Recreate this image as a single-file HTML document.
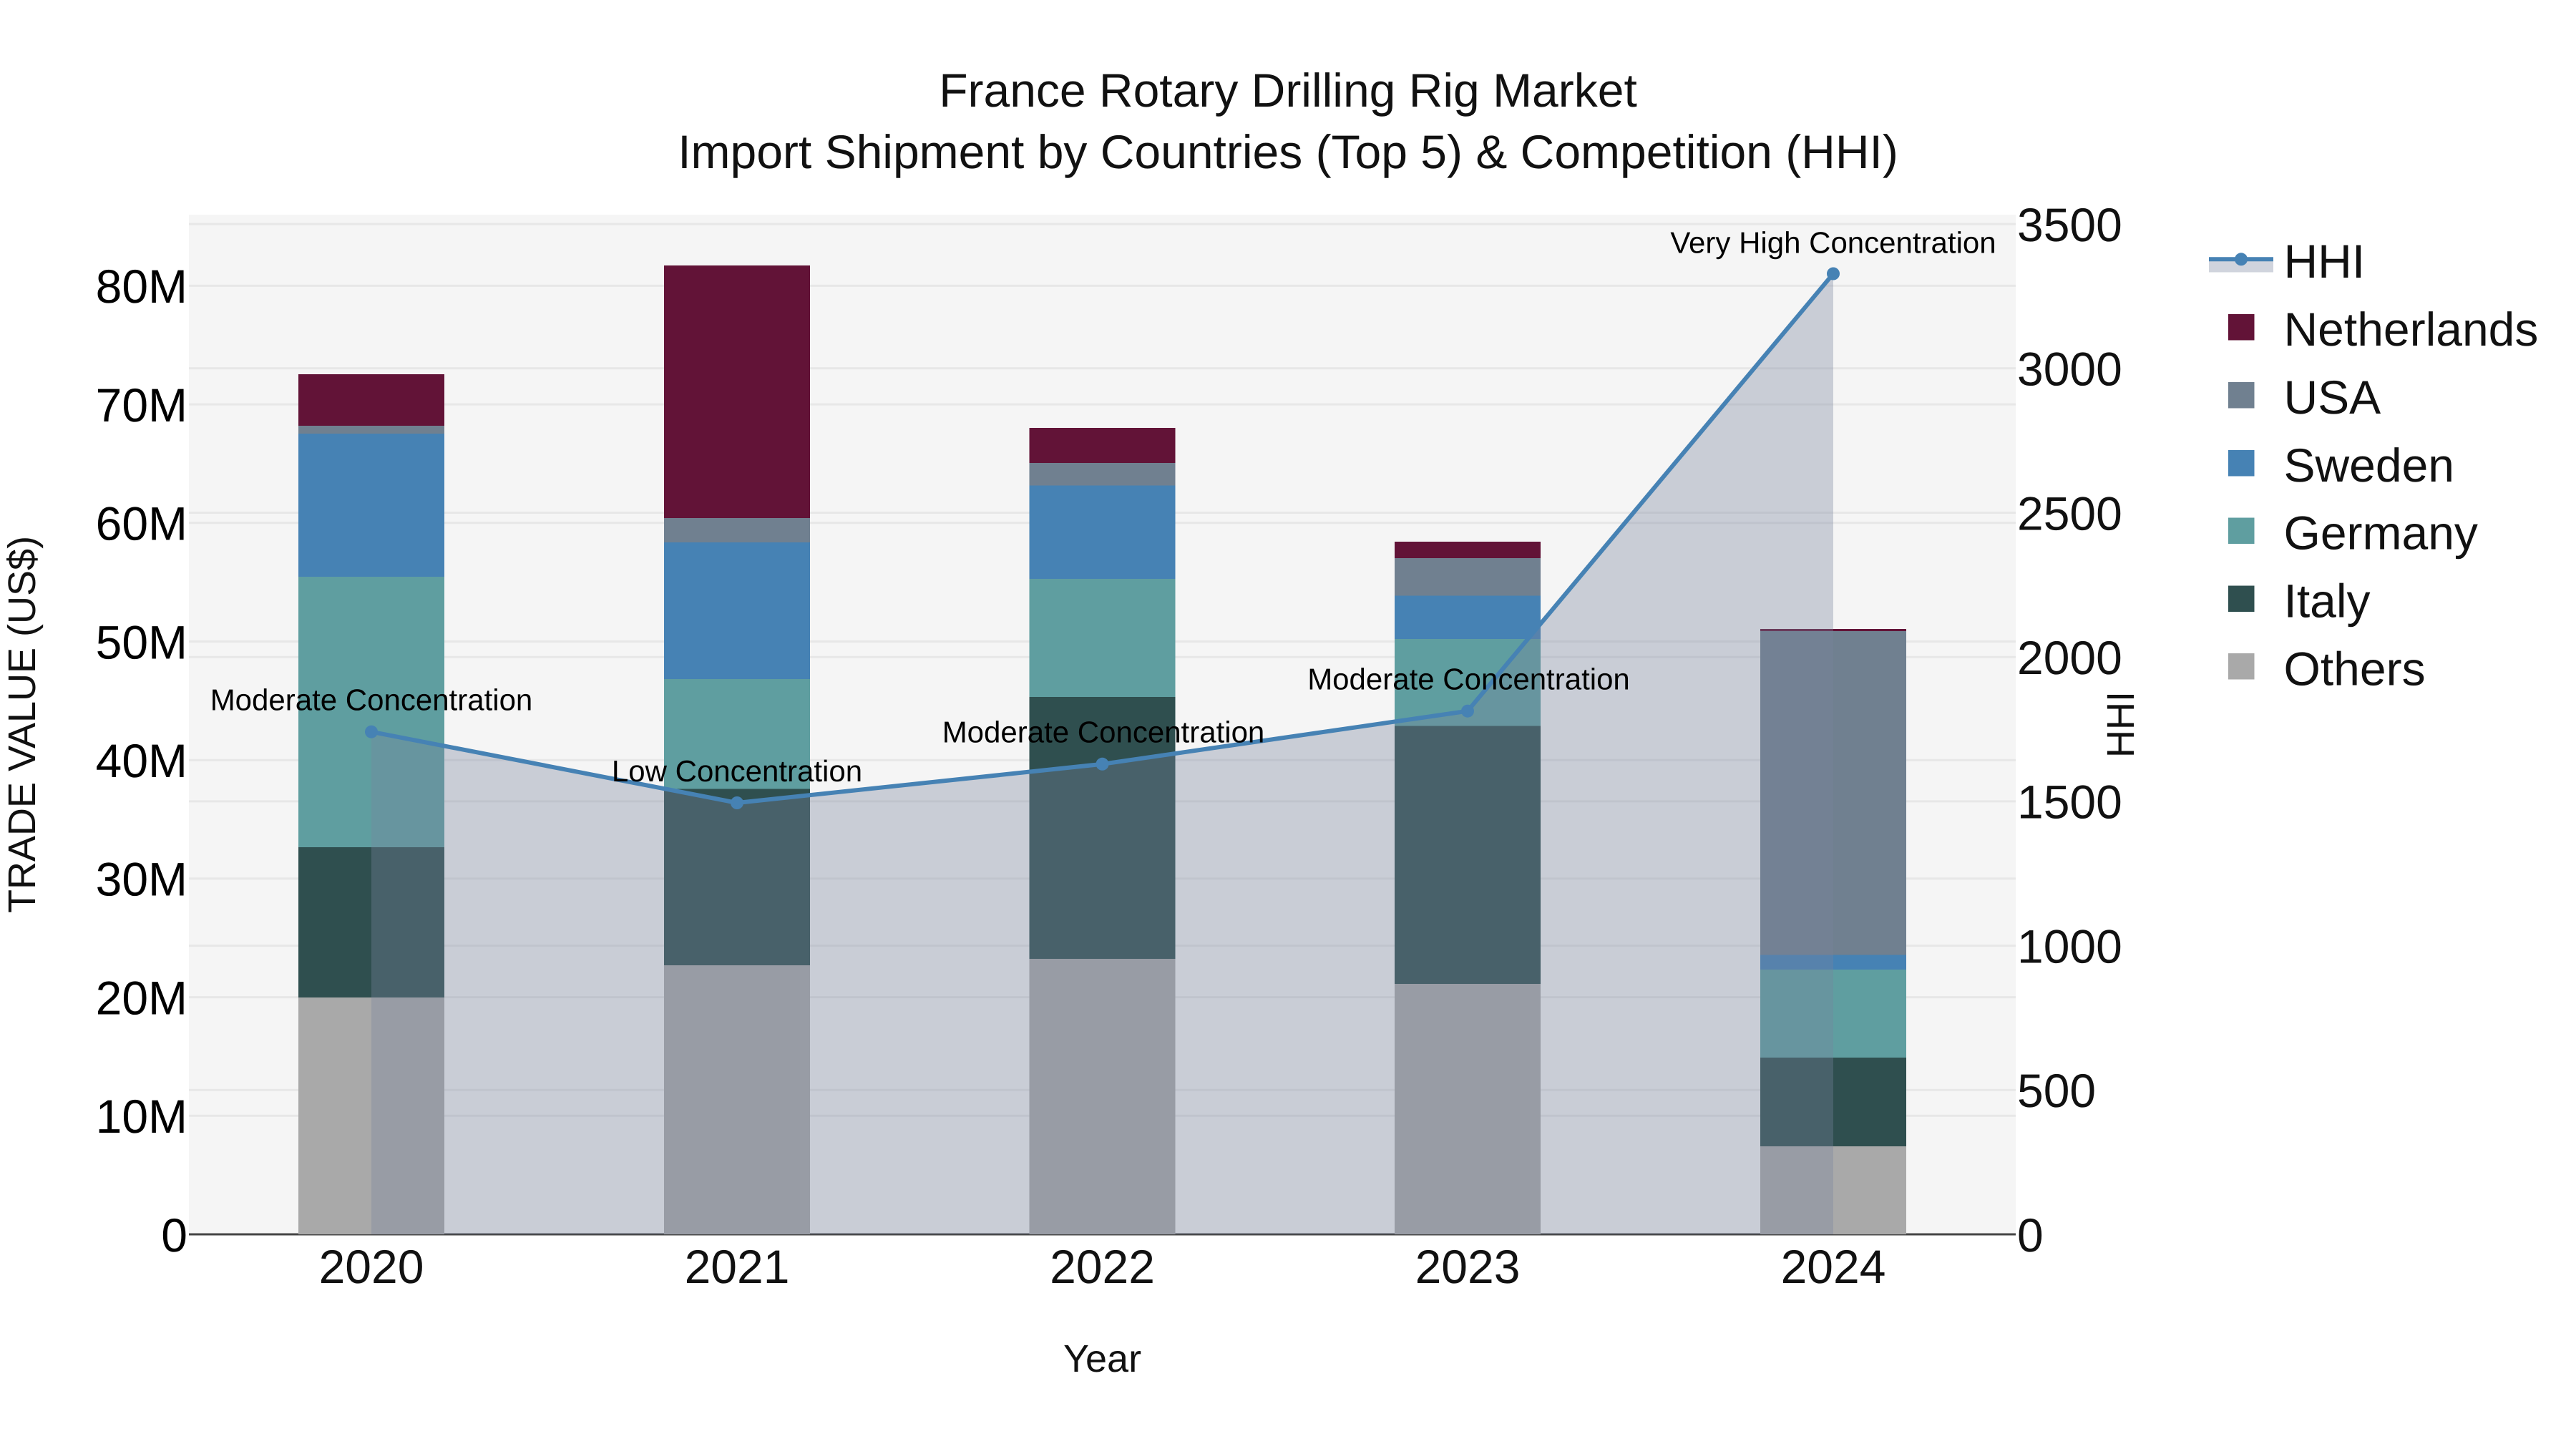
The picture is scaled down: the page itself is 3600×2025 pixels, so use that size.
<!DOCTYPE html>
<html lang="en">
<head>
<meta charset="utf-8">
<title>France Rotary Drilling Rig Market</title>
<style>
html,body{margin:0;padding:0;background:#fff;width:3600px;height:2025px;overflow:hidden}
svg{display:block}
text{font-family:"Liberation Sans",Arial,sans-serif;white-space:pre;text-rendering:geometricPrecision}
.t{font-size:66px;fill:#111}
.l{font-size:66px;fill:#000;text-anchor:end}
.x{font-size:66px;fill:#111;text-anchor:middle}
.r{font-size:66px;fill:#111}
.a{font-size:42px;fill:#000;text-anchor:middle}
.g{stroke:#e7e7e7;stroke-width:3;fill:none}
</style>
</head>
<body>
<svg width="3600" height="2025" viewBox="0 0 3600 2025" xmlns="http://www.w3.org/2000/svg">
<rect width="3600" height="2025" fill="#fff"/>
<rect x="264" y="300" width="2553" height="1425" fill="#f5f5f5"/>
<g class="g">
<path d="M264 1559.3H2817M264 1393.6H2817M264 1227.9H2817M264 1062.2H2817M264 896.5H2817M264 730.8H2817M264 565.1H2817M264 399.4H2817"/>
<path d="M264 1523.3H2817M264 1321.6H2817M264 1119.9H2817M264 918.2H2817M264 716.5H2817M264 514.8H2817M264 313.1H2817"/>
</g>
<path d="M264 1725H2817" stroke="#444" stroke-width="3" fill="none"/>

<!-- bars: 2020 -->
<g>
<rect x="417" y="1394" width="204" height="331" fill="#a9a9a9"/>
<rect x="417" y="1184" width="204" height="210" fill="#2f4f4f"/>
<rect x="417" y="806" width="204" height="378" fill="#5f9ea0"/>
<rect x="417" y="606" width="204" height="200" fill="#4682b4"/>
<rect x="417" y="595" width="204" height="11" fill="#708090"/>
<rect x="417" y="523" width="204" height="72" fill="#621337"/>
</g>
<!-- 2021 -->
<g>
<rect x="928" y="1349" width="204" height="376" fill="#a9a9a9"/>
<rect x="928" y="1102.5" width="204" height="246.5" fill="#2f4f4f"/>
<rect x="928" y="949" width="204" height="153.5" fill="#5f9ea0"/>
<rect x="928" y="758" width="204" height="191" fill="#4682b4"/>
<rect x="928" y="724" width="204" height="34" fill="#708090"/>
<rect x="928" y="371" width="204" height="353" fill="#621337"/>
</g>
<!-- 2022 -->
<g>
<rect x="1438.5" y="1340" width="204" height="385" fill="#a9a9a9"/>
<rect x="1438.5" y="974" width="204" height="366" fill="#2f4f4f"/>
<rect x="1438.5" y="809" width="204" height="165" fill="#5f9ea0"/>
<rect x="1438.5" y="678.5" width="204" height="130.5" fill="#4682b4"/>
<rect x="1438.5" y="647" width="204" height="31.5" fill="#708090"/>
<rect x="1438.5" y="598" width="204" height="49" fill="#621337"/>
</g>
<!-- 2023 -->
<g>
<rect x="1949" y="1375" width="204" height="350" fill="#a9a9a9"/>
<rect x="1949" y="1014.5" width="204" height="360.5" fill="#2f4f4f"/>
<rect x="1949" y="893" width="204" height="121.5" fill="#5f9ea0"/>
<rect x="1949" y="832.5" width="204" height="60.5" fill="#4682b4"/>
<rect x="1949" y="780" width="204" height="52.5" fill="#708090"/>
<rect x="1949" y="757" width="204" height="23" fill="#621337"/>
</g>
<!-- 2024 -->
<g>
<rect x="2460" y="1602" width="204" height="123" fill="#a9a9a9"/>
<rect x="2460" y="1478" width="204" height="124" fill="#2f4f4f"/>
<rect x="2460" y="1355" width="204" height="123" fill="#5f9ea0"/>
<rect x="2460" y="1334.5" width="204" height="20.5" fill="#4682b4"/>
<rect x="2460" y="882" width="204" height="452.5" fill="#708090"/>
<rect x="2460" y="879" width="204" height="3" fill="#621337"/>
</g>

<!-- HHI fill and line -->
<path d="M519 1022.7L1030 1122L1540.5 1067.8L2051 993.7L2562 382.5V1725H519Z" fill="rgb(120,132,158)" fill-opacity=".35"/>
<path d="M519 1022.7L1030 1122L1540.5 1067.8L2051 993.7L2562 382.5" fill="none" stroke="#4682b4" stroke-width="6" stroke-linejoin="round"/>
<g fill="#4682b4">
<circle cx="519" cy="1022.7" r="9"/>
<circle cx="1030" cy="1122" r="9"/>
<circle cx="1540.5" cy="1067.8" r="9"/>
<circle cx="2051" cy="993.7" r="9"/>
<circle cx="2562" cy="382.5" r="9"/>
</g>

<!-- annotations -->
<text class="a" x="519" y="992.5">Moderate Concentration</text>
<text class="a" x="1030" y="1091.8">Low Concentration</text>
<text class="a" x="1542" y="1037.6">Moderate Concentration</text>
<text class="a" x="2052.5" y="963.5">Moderate Concentration</text>
<text class="a" x="2562" y="353.5">Very High Concentration</text>

<!-- title -->
<text class="t" x="1800" y="149" text-anchor="middle">France Rotary Drilling Rig Market</text>
<text class="t" x="1800" y="235" text-anchor="middle">Import Shipment by Countries (Top 5) &amp; Competition (HHI)</text>

<!-- left ticks -->
<text class="l" x="262" y="1748.8">0</text>
<text class="l" x="262" y="1583">10M</text>
<text class="l" x="262" y="1417.4">20M</text>
<text class="l" x="262" y="1251.7">30M</text>
<text class="l" x="262" y="1086">40M</text>
<text class="l" x="262" y="920.3">50M</text>
<text class="l" x="262" y="754.6">60M</text>
<text class="l" x="262" y="588.9">70M</text>
<text class="l" x="262" y="423.2">80M</text>

<!-- right ticks -->
<text class="r" x="2819" y="1748.8">0</text>
<text class="r" x="2819" y="1547.1">500</text>
<text class="r" x="2819" y="1345.4">1000</text>
<text class="r" x="2819" y="1143.7">1500</text>
<text class="r" x="2819" y="942">2000</text>
<text class="r" x="2819" y="740.3">2500</text>
<text class="r" x="2819" y="538.6">3000</text>
<text class="r" x="2819" y="336.9">3500</text>

<!-- x ticks -->
<text class="x" x="519" y="1793">2020</text>
<text class="x" x="1030" y="1793">2021</text>
<text class="x" x="1540.5" y="1793">2022</text>
<text class="x" x="2051" y="1793">2023</text>
<text class="x" x="2562" y="1793">2024</text>

<!-- axis titles -->
<text x="1540.5" y="1917" text-anchor="middle" font-size="54" fill="#111">Year</text>
<text transform="translate(49 1012.5) rotate(-90)" text-anchor="middle" font-size="54" fill="#111">TRADE VALUE (US$)</text>
<text transform="translate(2982 1012.5) rotate(-90)" text-anchor="middle" font-size="54" fill="#111">HHI</text>

<!-- legend -->
<rect x="3087" y="362" width="90" height="18.5" fill="rgb(120,132,158)" fill-opacity=".35"/>
<path d="M3087 362.3H3177" stroke="#4682b4" stroke-width="6" fill="none"/>
<circle cx="3132" cy="362.3" r="9" fill="#4682b4"/>
<rect x="3114" y="439" width="36.5" height="36.5" fill="#621337"/>
<rect x="3114" y="534" width="36.5" height="36.5" fill="#708090"/>
<rect x="3114" y="629" width="36.5" height="36.5" fill="#4682b4"/>
<rect x="3114" y="723.5" width="36.5" height="36.5" fill="#5f9ea0"/>
<rect x="3114" y="818.5" width="36.5" height="36.5" fill="#2f4f4f"/>
<rect x="3114" y="913" width="36.5" height="36.5" fill="#a9a9a9"/>
<g class="r">
<text class="r" x="3191.5" y="388">HHI</text>
<text class="r" x="3191.5" y="483">Netherlands</text>
<text class="r" x="3191.5" y="578">USA</text>
<text class="r" x="3191.5" y="672.8">Sweden</text>
<text class="r" x="3191.5" y="767.7">Germany</text>
<text class="r" x="3191.5" y="862.6">Italy</text>
<text class="r" x="3191.5" y="957.5">Others</text>
</g>
</svg>
</body>
</html>
